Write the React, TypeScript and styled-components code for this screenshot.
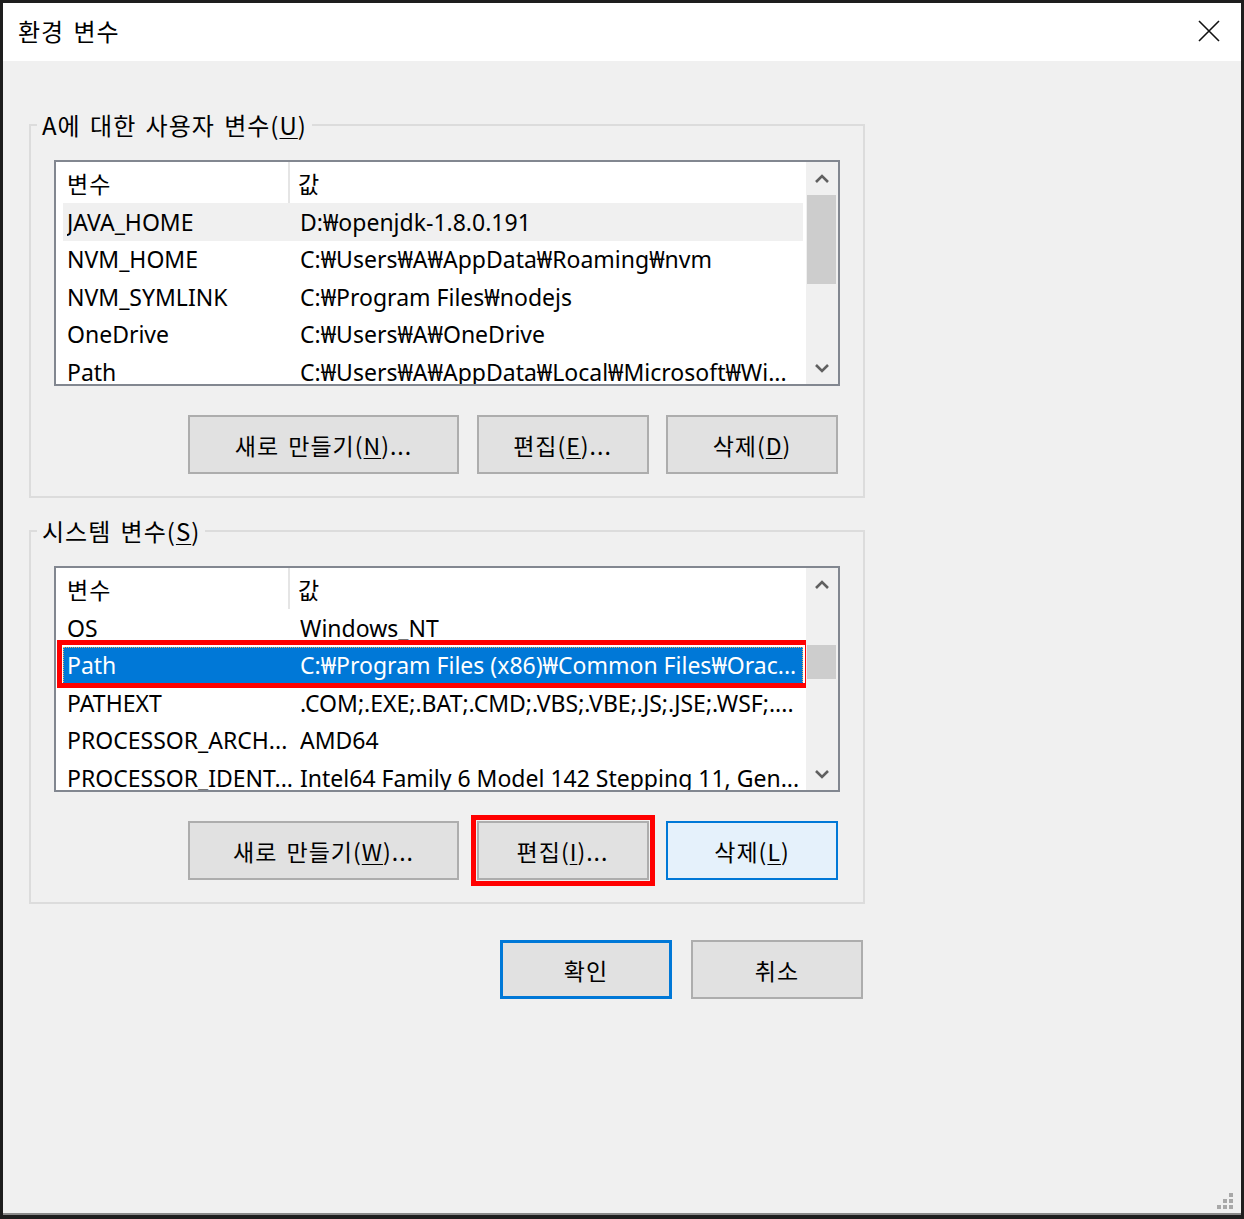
import React from "react"
import styled, { createGlobalStyle } from "styled-components"

const GlobalStyle = createGlobalStyle`
  html, body {
    margin: 0;
    padding: 0;
    background: #1e1e1e;
  }
  body {
    font-family: "Noto Sans", "Noto Sans CJK KR", sans-serif;
    color: #000;
  }
`

const Window = styled.div`
  display: flex;
  flex-direction: column;
  width: 1244px;
  height: 1219px;
  box-sizing: border-box;
  border: 3px solid #1e1e1e;
  border-bottom-width: 4px;
  background: #f0f0f0;
  box-shadow: inset 0 -2px 0 #8a8a8a;
`

const TitleBar = styled.div`
  display: flex;
  align-items: center;
  justify-content: space-between;
  height: 58px;
  padding: 0 20px 0 15px;
  background: #fff;
`

const Title = styled.span`
  font-size: 24px;
  line-height: 26px;
  letter-spacing: 1px;
  word-spacing: 3px;
  margin-top: -3px;
  font-family: "Noto Sans CJK KR", sans-serif;
`

const CloseButton = styled.div`
  display: flex;
  width: 24px;
  height: 24px;
  align-items: center;
  justify-content: center;
  margin-top: -2px;
`

const Body = styled.div`
  flex: 1;
  display: flex;
  flex-direction: column;
  padding: 51px 0 0 26px;
`

const Group = styled.fieldset<{ $gap?: number }>`
  margin: ${(p) => p.$gap ?? 0}px 0 0 0;
  width: 836px;
  box-sizing: border-box;
  border: 2px solid #dcdcdc;
  padding: 22px 23px 22px 23px;
  min-inline-size: 0;
`

const Legend = styled.legend`
  margin-left: -17px;
  padding: 0 5px;
  font-size: 24px;
  line-height: 26px;
  letter-spacing: 1px;
  word-spacing: 3px;
  font-family: "Noto Sans CJK KR", sans-serif;
`

const Key = styled.u`
  text-decoration-thickness: 1px;
  text-underline-offset: 3px;
`

const ListBox = styled.div`
  display: flex;
  width: 786px;
  height: 226px;
  box-sizing: border-box;
  border: 2px solid #828790;
  background: #fff;
  overflow: hidden;
`

const ListArea = styled.div`
  flex: 1;
  display: flex;
  flex-direction: column;
  overflow: hidden;
`

const HeaderRow = styled.div`
  display: flex;
  flex-shrink: 0;
  height: 41px;
  margin-right: 3px;
`

const HeaderCell = styled.div<{ $width?: number; $pad: number }>`
  display: flex;
  align-items: center;
  box-sizing: border-box;
  padding-left: ${(p) => p.$pad}px;
  ${(p) => (p.$width ? `width: ${p.$width}px;` : "flex: 1;")}
  ${(p) => (p.$width ? "border-right: 2px solid #e5e5e5;" : "")}
  font-size: 23px;
  letter-spacing: 1px;
  font-family: "Noto Sans CJK KR", sans-serif;
`

const Row = styled.div<{ $state?: "hover" | "selected" }>`
  position: relative;
  display: grid;
  grid-template-columns: 233px 1fr;
  flex-shrink: 0;
  height: 37.5px;
  align-items: center;
  margin: 0 3px 0 7px;
  padding-left: 4px;
  box-sizing: border-box;
  font-size: 23px;
  white-space: nowrap;
  background: ${(p) =>
    p.$state === "selected" ? "#0078d7" : p.$state === "hover" ? "#f0f0f0" : "transparent"};
  color: ${(p) => (p.$state === "selected" ? "#fff" : "#000")};
  outline: ${(p) => (p.$state === "selected" ? "1px dotted #e8b060" : "none")};
  outline-offset: -1px;
`

const Cell = styled.span`
  overflow: hidden;
`

const Highlight = styled.div<{ $inset: string }>`
  position: absolute;
  inset: ${(p) => p.$inset};
  border: 5px solid #ff0000;
  pointer-events: none;
`

const ScrollBar = styled.div`
  display: flex;
  flex-direction: column;
  width: 32px;
  background: #f0f0f0;
`

const ArrowCell = styled.div`
  display: flex;
  height: 33px;
  align-items: center;
  justify-content: center;
  flex-shrink: 0;
`

const Track = styled.div`
  flex: 1;
  display: flex;
  flex-direction: column;
`

const Thumb = styled.div<{ $top: number; $height: number }>`
  margin: ${(p) => p.$top}px 2px 0 1px;
  height: ${(p) => p.$height}px;
  background: #cdcdcd;
`

const ButtonRow = styled.div`
  display: flex;
  justify-content: flex-end;
  gap: 17.5px;
  margin-top: 29px;
  padding-right: 2px;
`

const Button = styled.div<{ $width: number; $variant?: "default" | "hover" }>`
  position: relative;
  display: flex;
  align-items: center;
  justify-content: center;
  width: ${(p) => p.$width}px;
  height: 59px;
  box-sizing: border-box;
  font-size: 23px;
  letter-spacing: 1px;
  word-spacing: 3px;
  font-family: "Noto Sans CJK KR", sans-serif;
  background: ${(p) => (p.$variant === "hover" ? "#e5f1fb" : "#e1e1e1")};
  border: ${(p) =>
    p.$variant === "default"
      ? "3px solid #0078d7"
      : p.$variant === "hover"
        ? "2px solid #0078d7"
        : "2px solid #adadad"};
`

const DialogButtons = styled.div`
  display: flex;
  justify-content: flex-end;
  gap: 19px;
  width: 836px;
  padding-right: 2px;
  box-sizing: border-box;
  margin-top: 36px;
`

const Grip = styled.div`
  margin-top: auto;
  align-self: flex-end;
  margin-right: 6px;
  margin-bottom: 4px;
  width: 20px;
  height: 20px;
`

type Item = { name: string; value: string; state?: "hover" | "selected"; marked?: boolean }

const userVars: Item[] = [
  { name: "JAVA_HOME", value: "D:₩openjdk-1.8.0.191", state: "hover" },
  { name: "NVM_HOME", value: "C:₩Users₩A₩AppData₩Roaming₩nvm" },
  { name: "NVM_SYMLINK", value: "C:₩Program Files₩nodejs" },
  { name: "OneDrive", value: "C:₩Users₩A₩OneDrive" },
  { name: "Path", value: "C:₩Users₩A₩AppData₩Local₩Microsoft₩Wi..." },
]

const systemVars: Item[] = [
  { name: "OS", value: "Windows_NT" },
  { name: "Path", value: "C:₩Program Files (x86)₩Common Files₩Orac...", state: "selected", marked: true },
  { name: "PATHEXT", value: ".COM;.EXE;.BAT;.CMD;.VBS;.VBE;.JS;.JSE;.WSF;...." },
  { name: "PROCESSOR_ARCH...", value: "AMD64" },
  { name: "PROCESSOR_IDENT...", value: "Intel64 Family 6 Model 142 Stepping 11, Gen..." },
]

function Chevron({ up }: { up?: boolean }) {
  return (
    <svg width="16" height="10" viewBox="0 0 16 10">
      <path
        d={up ? "M2 8 L8 2 L14 8" : "M2 2 L8 8 L14 2"}
        fill="none"
        stroke="#606060"
        strokeWidth="2.6"
      />
    </svg>
  )
}

function VarList({ items, thumbTop, thumbHeight }: { items: Item[]; thumbTop: number; thumbHeight: number }) {
  return (
    <ListBox>
      <ListArea>
        <HeaderRow>
          <HeaderCell $width={234} $pad={11}>변수</HeaderCell>
          <HeaderCell $pad={8}>값</HeaderCell>
        </HeaderRow>
        {items.map((it) => (
          <Row key={it.name} $state={it.state}>
            <Cell>{it.name}</Cell>
            <Cell>{it.value}</Cell>
            {it.marked && <Highlight $inset="-7px -7px -4px -6px" />}
          </Row>
        ))}
      </ListArea>
      <ScrollBar>
        <ArrowCell>
          <Chevron up />
        </ArrowCell>
        <Track>
          <Thumb $top={thumbTop} $height={thumbHeight} />
        </Track>
        <ArrowCell>
          <Chevron />
        </ArrowCell>
      </ScrollBar>
    </ListBox>
  )
}

export default function App() {
  return (
    <>
      <GlobalStyle />
      <Window>
        <TitleBar>
          <Title>환경 변수</Title>
          <CloseButton>
            <svg width="22" height="22" viewBox="0 0 22 22">
              <path d="M1 1 L21 21 M21 1 L1 21" stroke="#111" strokeWidth="1.6" />
            </svg>
          </CloseButton>
        </TitleBar>
        <Body>
          <Group>
            <Legend>
              A에 대한 사용자 변수(<Key>U</Key>)
            </Legend>
            <VarList items={userVars} thumbTop={0} thumbHeight={89} />
            <ButtonRow>
              <Button $width={271}>
                새로 만들기(<Key>N</Key>)...
              </Button>
              <Button $width={172}>
                편집(<Key>E</Key>)...
              </Button>
              <Button $width={172}>
                삭제(<Key>D</Key>)
              </Button>
            </ButtonRow>
          </Group>
          <Group $gap={20}>
            <Legend>
              시스템 변수(<Key>S</Key>)
            </Legend>
            <VarList items={systemVars} thumbTop={44} thumbHeight={34} />
            <ButtonRow>
              <Button $width={271}>
                새로 만들기(<Key>W</Key>)...
              </Button>
              <Button $width={172}>
                편집(<Key>I</Key>)...
                <Highlight $inset="-8px" />
              </Button>
              <Button $width={172} $variant="hover">
                삭제(<Key>L</Key>)
              </Button>
            </ButtonRow>
          </Group>
          <DialogButtons>
            <Button $width={172} $variant="default">
              확인
            </Button>
            <Button $width={172}>취소</Button>
          </DialogButtons>
          <Grip>
            <svg width="20" height="20" viewBox="0 0 20 20">
              {[
                [14, 2],
                [8, 8],
                [14, 8],
                [2, 14],
                [8, 14],
                [14, 14],
              ].map(([x, y]) => (
                <rect key={`${x}-${y}`} x={x} y={y} width="4" height="4" fill="#a8a8a8" />
              ))}
            </svg>
          </Grip>
        </Body>
      </Window>
    </>
  )
}
